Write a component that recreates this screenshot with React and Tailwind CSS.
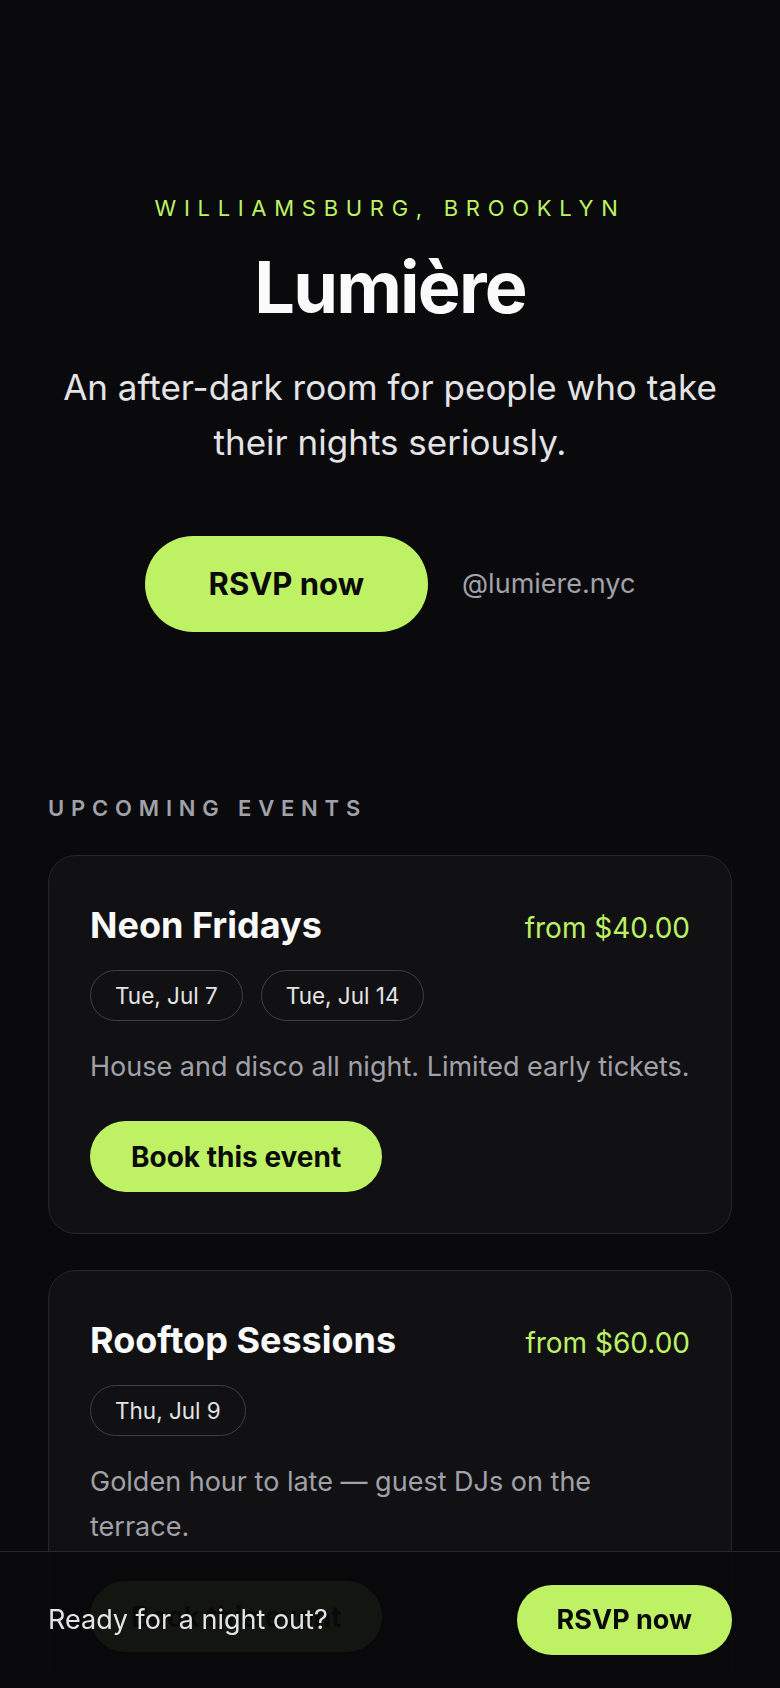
import React from "react";

const EVENTS = [
  {
    id: "neon",
    title: "Neon Fridays",
    price: "from $40.00",
    dates: ["Tue, Jul 7", "Tue, Jul 14"],
    blurb: "House and disco all night. Limited early tickets.",
  },
  {
    id: "rooftop",
    title: "Rooftop Sessions",
    price: "from $60.00",
    dates: ["Thu, Jul 9"],
    blurb: "Golden hour to late — guest DJs on the terrace.",
  },
];

function EventCard({ event }) {
  return (
    <article className="rounded-[28px] border border-[#27272a] bg-[#111113] px-[41px] pt-[48px] pb-[41px]">
      <div className="flex items-baseline justify-between gap-4">
        <h3 className="text-[36px] font-bold leading-[1.2] text-[#fafafa]">{event.title}</h3>
        <span className="text-[28px] text-[#bef264]">{event.price}</span>
      </div>

      <div className="mt-[21px] flex flex-wrap gap-[18px]">
        {event.dates.map((date) => (
          <span
            key={date}
            className="flex h-[51px] items-center rounded-full border-[1.5px] border-[#3f3f46] px-[24px] text-[22.5px] text-[#e4e4e7]"
          >
            {date}
          </span>
        ))}
      </div>

      <p className="mt-[23px] text-[27px] leading-[45px] text-[#a1a1aa]">{event.blurb}</p>

      <div className="mt-[32px]">
        <button
          type="button"
          className="h-[71px] rounded-full bg-[#bef264] px-[41px] text-[28px] font-bold text-[#0a0a0a]"
        >
          Book this event
        </button>
      </div>
    </article>
  );
}

export default function App() {
  return (
    <div className="min-h-screen bg-[#0a0a0c] font-[Inter,sans-serif] text-[#fafafa]">
      <main className="px-[48px] pt-[192px] pb-[200px]">
        <section className="text-center">
          <p className="text-[22px] uppercase leading-[33px] tracking-[0.35em] text-[#bef264]">
            Williamsburg, Brooklyn
          </p>
          <h1 className="mt-[26px] text-[72px] font-bold leading-none tracking-tight text-[#fafafa]">
            Lumière
          </h1>
          <p className="mt-[37px] text-[35px] leading-[55px] text-[#e4e4e7]">
            An after-dark room for people who take their nights seriously.
          </p>
          <div className="mt-[66px] flex items-center justify-center gap-[34px]">
            <button
              type="button"
              className="h-[96px] rounded-full bg-[#bef264] px-[64px] text-[31px] font-bold text-[#0a0a0a]"
            >
              RSVP now
            </button>
            <span className="text-[27px] text-[#a1a1aa]">@lumiere.nyc</span>
          </div>
        </section>

        <section className="mt-[158px]">
          <h2 className="pt-[2px] text-[22px] font-semibold uppercase leading-[33px] tracking-[0.31em] text-[#a1a1aa]">
            Upcoming events
          </h2>
          <div className="mt-[30px] flex flex-col gap-[36px]">
            {EVENTS.map((event) => (
              <EventCard key={event.id} event={event} />
            ))}
          </div>
        </section>
      </main>

      <div className="fixed inset-x-0 bottom-0 flex h-[137px] items-center justify-between border-t border-[#27272a] bg-[#0a0a0c]/[0.95] px-[48px]">
        <span className="text-[27px] text-[#e4e4e7]">Ready for a night out?</span>
        <button
          type="button"
          className="h-[70px] rounded-full bg-[#bef264] px-[40px] text-[27px] font-bold text-[#0a0a0a]"
        >
          RSVP now
        </button>
      </div>
    </div>
  );
}
